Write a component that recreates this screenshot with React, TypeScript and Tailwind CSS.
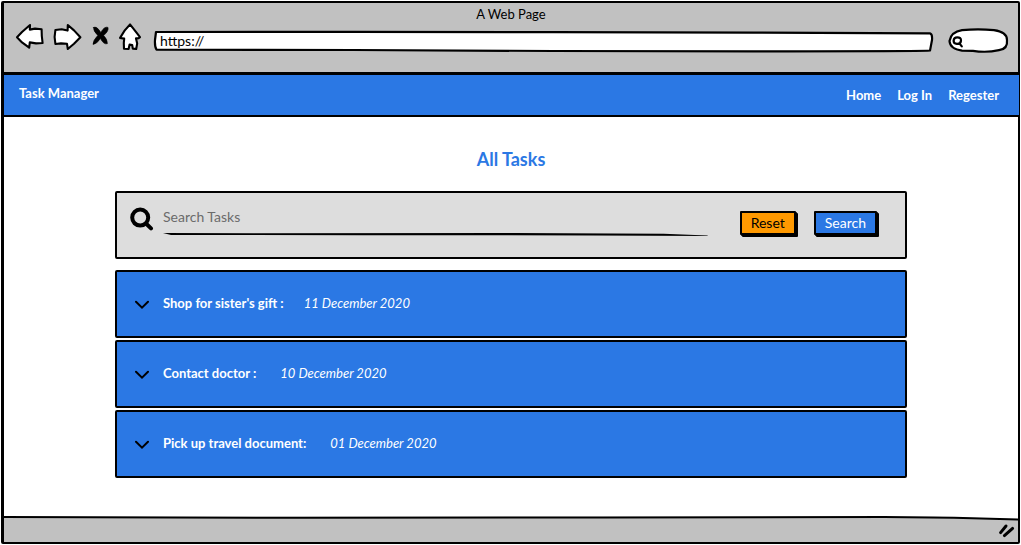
import { useState } from "react";
import type { ReactNode } from "react";

type Task = { title: string; date: string; gap: string };

const tasks: Task[] = [
  { title: "Shop for sister's gift :", date: "11 December 2020", gap: "gap-5" },
  { title: "Contact doctor :", date: "10 December 2020", gap: "gap-6" },
  { title: "Pick up travel document:", date: "01 December 2020", gap: "gap-6" },
];

function ToolButton({ label, width, children }: { label: string; width: number; children: ReactNode }) {
  return (
    <button type="button" aria-label={label} className="shrink-0">
      <svg
        width={width}
        height={28}
        viewBox={`0 0 ${width} 28`}
        fill="#fff"
        stroke="#000"
        strokeWidth={2.1}
        strokeLinejoin="round"
        strokeLinecap="round"
        className="block overflow-visible"
      >
        {children}
      </svg>
    </button>
  );
}

function Outline({ viewBox, d }: { viewBox: string; d: string }) {
  return (
    <svg
      aria-hidden="true"
      viewBox={viewBox}
      preserveAspectRatio="none"
      className="pointer-events-none absolute inset-0 h-full w-full overflow-visible"
    >
      <path d={d} fill="#fff" stroke="#000" strokeWidth={2.2} strokeLinejoin="round" vectorEffect="non-scaling-stroke" />
    </svg>
  );
}

function BrowserBar() {
  return (
    <header className="bg-[#c1c1c1]">
      <div className="h-5 text-center text-[13px] leading-[22px]">A Web Page</div>
      <div className="flex h-[49px] items-start pr-[10px] pl-3">
        <div className="flex gap-[9px]">
          <ToolButton label="Back" width={28}>
            <path d="M1 14.3 L6 9 L14 2 L13.8 6.6 L19 5.6 L25.6 6.2 L25.8 13 L26.6 20 L20 20.4 L13.8 19.4 L13.2 24.6 L6 19.4 Z" />
          </ToolButton>
          <ToolButton label="Forward" width={30}>
            <path d="M2.4 7 L8.6 6.2 L14.6 7.6 L14.8 2 L21 7.4 L27.4 14.2 L21 20.8 L14.8 26 L14 20.8 L8 20.4 L2.4 21 L1.6 14 Z" />
          </ToolButton>
          <ToolButton label="Stop" width={18}>
            <path
              d="M1.6 4.4 Q4.6 2.6 8.8 9.4 Q12.4 3 16 4.4 Q17 8 11.6 12.6 Q15.4 16 15.4 20.6 Q12 22 8.4 15.6 Q4.6 21.4 1 21.4 Q0.8 17.6 5.8 12.4 Q1 8 1.6 4.4 Z"
              fill="#000"
              strokeWidth={0.6}
            />
          </ToolButton>
          <ToolButton label="Home page" width={23}>
            <path d="M11 1.4 Q15.5 7 21 14.2 Q19.5 15.6 17 15.4 L18.2 20.4 L17.2 26 L13.8 25.6 L13.2 22 L10.6 21.6 L9.6 26 L5 25.8 L4.8 20 L5.2 15.6 L1 15 Q5 7 11 1.4 Z" />
          </ToolButton>
        </div>
        <div className="relative mt-2 ml-3 h-[21px] min-w-0 flex-1">
          <Outline
            viewBox="0 0 780 21"
            d="M2 1 L200 0.8 L400 1.2 L600 1.6 L777 2.4 Q779.5 3 779 9 L777 19.6 Q775 20.4 600 20.3 L400 20 L200 19 L2.5 18.6 Q0.6 16 1 9 Z"
          />
          <input
            aria-label="Address"
            defaultValue="https://"
            className="relative block h-5 w-full bg-transparent pr-2 pl-[6px] text-sm leading-5 text-black outline-none"
          />
        </div>
        <div className="relative mt-[5px] ml-[15px] h-[25px] w-[60px] shrink-0">
          <Outline
            viewBox="0 0 60 25"
            d="M1.5 13 Q3 4 14 2.2 Q30 0.4 46 2.2 Q59 4 59 12 Q60 21 51 22.2 Q38 25 25 22.8 L14 22.6 Q2 21 1.5 13 Z"
          />
          <input
            aria-label="Browser search"
            className="relative block h-full w-full bg-transparent pr-3 pl-4 text-sm outline-none"
          />
          <svg
            aria-hidden="true"
            width="12"
            height="12"
            viewBox="0 0 12 12"
            fill="none"
            stroke="#000"
            strokeWidth="2.2"
            strokeLinecap="round"
            className="absolute top-2 left-1"
          >
            <path d="M5.2 1.4 Q9.2 1.4 9 4.6 Q8.6 8.2 4.9 7.9 Q1.4 7.6 1.6 4.6 Q2 1.4 5.2 1.4 Z M7.4 7.4 L9.8 10.4" />
          </svg>
        </div>
      </div>
    </header>
  );
}

function NavBar() {
  return (
    <nav className="-mr-px flex items-center justify-between border-t-[3px] border-b-2 border-black bg-[#2b78e4] pr-5 pl-[15px] text-[13px] leading-5 font-bold text-white">
      <a href="#top" className="pb-1">
        Task Manager
      </a>
      <div className="flex gap-4 py-[10px]">
        <a href="#home">Home</a>
        <a href="#login">Log In</a>
        <a href="#register">Regester</a>
      </div>
    </nav>
  );
}

function SearchPanel() {
  const [query, setQuery] = useState("");
  return (
    <form
      onSubmit={(event) => event.preventDefault()}
      className="flex h-[68px] items-start rounded-[2px] border-2 border-black bg-[#dddddd] pr-7 pl-[13px]"
    >
      <svg
        aria-hidden="true"
        width="24"
        height="24"
        viewBox="0 0 24 24"
        fill="none"
        stroke="#000"
        strokeLinecap="round"
        className="mt-[14px] shrink-0"
      >
        <circle cx="10.2" cy="10.6" r="8" strokeWidth="4" />
        <path d="M16.5 17 L21 21.4" strokeWidth="4" />
      </svg>
      <div className="mt-2 ml-[9px] min-w-0 flex-1">
        <input
          aria-label="Search Tasks"
          placeholder="Search Tasks"
          value={query}
          onChange={(event) => setQuery(event.target.value)}
          className="mb-[2px] block h-[30px] w-full bg-transparent text-sm text-black outline-none placeholder:text-[#6b6b6b]"
        />
        <svg aria-hidden="true" viewBox="0 0 544 4" preserveAspectRatio="none" className="block h-1 w-full">
          <path d="M0 0 L90 0.2 L350 0 L500 0.8 L544 2.4 L544 3.1 L430 2.4 L200 2.2 L8 2 Z" fill="#000" />
        </svg>
      </div>
      <div className="mt-[18px] ml-8 flex shrink-0 gap-[18px] text-sm leading-5">
        <button
          type="reset"
          onClick={() => setQuery("")}
          className="rounded-[1px] border-2 border-black bg-[#ff9900] px-[9px] text-black shadow-[1px_1px_0_#000,2px_2px_0_#000]"
        >
          Reset
        </button>
        <button
          type="submit"
          className="rounded-[1px] border-2 border-black bg-[#2b78e4] px-[9px] text-white shadow-[1px_1px_0_#000,2px_2px_0_#000]"
        >
          Search
        </button>
      </div>
    </form>
  );
}

function TaskRow({ task }: { task: Task }) {
  return (
    <li className="flex h-[68px] items-center rounded-[2px] border-2 border-black bg-[#2b78e4] pl-[18px] text-[13px] text-white">
      <button type="button" aria-label={`Expand ${task.title}`} className="mr-[14px] shrink-0">
        <svg width="14" height="10" viewBox="0 0 14 10" fill="none" stroke="#000" strokeWidth="2" className="block">
          <path d="M1 2.8 L7 8.6 L13 2.8" strokeLinecap="round" />
        </svg>
      </button>
      <div className={`flex ${task.gap}`}>
        <span className="font-bold">{task.title}</span>
        <span className="italic">{task.date}</span>
      </div>
    </li>
  );
}

export default function App() {
  return (
    <div className="flex min-h-screen bg-white p-px font-['Lato','Liberation_Sans',sans-serif] text-black">
      <div className="flex min-w-0 flex-1 flex-col rounded-[2px] border-2 border-l-[3px] border-black">
        <BrowserBar />
        <NavBar />
        <main className="flex-1 px-4 pt-7 pb-9">
          <h1 className="mb-[18px] text-center text-[18px] leading-7 font-bold text-[#2b78e4]">All Tasks</h1>
          <div className="mx-auto max-w-[792px]">
            <SearchPanel />
            <ul className="mt-[11px] flex flex-col gap-[2px]">
              {tasks.map((task) => (
                <TaskRow key={task.title} task={task} />
              ))}
            </ul>
          </div>
        </main>
        <footer className="relative flex h-[26px] items-center justify-end bg-[#c1c1c1] pr-[2px]">
          <svg
            aria-hidden="true"
            viewBox="0 0 1014 6"
            preserveAspectRatio="none"
            className="absolute inset-x-0 top-0 h-[6px] w-full"
          >
            <path d="M0 0 H1014 V3 L930 0.8 H0 Z" fill="#fff" />
            <path d="M0 1 L300 1.8 L600 1.4 L880 1 L950 1.8 L1014 3.5" fill="none" stroke="#000" strokeWidth="2" />
          </svg>
          <svg
            aria-hidden="true"
            width="18"
            height="16"
            viewBox="0 0 18 16"
            fill="none"
            stroke="#000"
            strokeWidth="3"
            strokeLinecap="round"
            className="mt-1"
          >
            <path d="M2.6 9.6 L8 3 M6.4 12.6 L14.6 5.4" />
          </svg>
        </footer>
      </div>
    </div>
  );
}
